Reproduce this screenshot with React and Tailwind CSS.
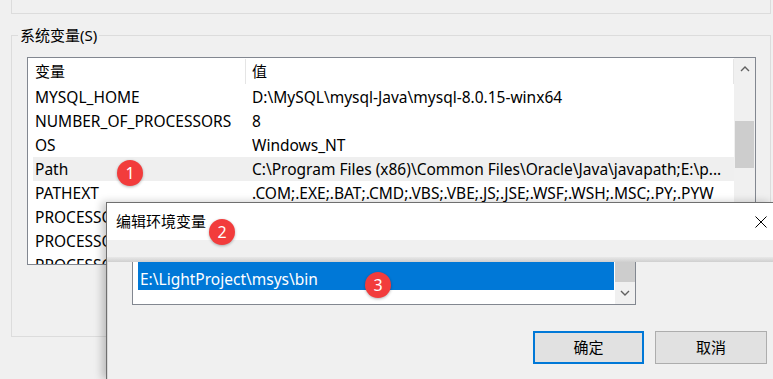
export default function App() {
  const rows = [
    ["MYSQL_HOME", "D:\\MySQL\\mysql-Java\\mysql-8.0.15-winx64"],
    ["NUMBER_OF_PROCESSORS", "8"],
    ["OS", "Windows_NT"],
    ["Path", "C:\\Program Files (x86)\\Common Files\\Oracle\\Java\\javapath;E:\\p..."],
    ["PATHEXT", ".COM;.EXE;.BAT;.CMD;.VBS;.VBE;.JS;.JSE;.WSF;.WSH;.MSC;.PY;.PYW"],
    ["PROCESSOR_ARCHITECTURE", "AMD64"],
    ["PROCESSOR_IDENTIFIER", "Intel64 Family 6"],
    ["PROCESSOR_LEVEL", "6"],
  ];
  const Badge = ({ n, cls }) => (
    <div
      className={`absolute ${cls} w-[26px] h-[26px] rounded-full bg-[#f23c3c] text-white text-[16px] leading-none flex items-center justify-center shadow-[0_1px_3px_rgba(0,0,0,0.3)] font-['Noto_Sans',sans-serif]`}
    >
      {n}
    </div>
  );
  return (
    <div className="relative w-[773px] h-[379px] overflow-hidden bg-[#f0f0f0] text-[15.5px] text-black font-['Noto_Sans','Noto_Sans_CJK_SC',sans-serif]">
      {/* upper group box remnant */}
      <div className="ml-[11px] mr-[2px] h-[14px] border-x border-b border-[#dcdcdc]" />
      {/* system variables group */}
      <div className="ml-[11px] mr-[2px] mt-[21px] h-[302px] border border-[#dcdcdc]">
        <div className="-mt-[10px] ml-[6px] w-fit bg-[#f0f0f0] px-[2px] leading-[18px] text-[15px]">系统变量(S)</div>
        <div className="ml-[15px] mt-[13px] w-[729px] h-[208px] border border-[#828790] bg-white flex overflow-hidden">
          <div className="flex-1 pl-[5px] overflow-hidden">
            <div className="h-[27px] flex items-center text-[15px]">
              <div className="w-[212px] pl-[2px]">变量</div>
              <div className="w-px h-[25px] bg-[#e5e5e5]" />
              <div className="flex-1 pl-[6px]">值</div>
              <div className="w-px h-[25px] bg-[#e5e5e5]" />
            </div>
            {rows.map(([k, v], i) => (
              <div
                key={k}
                className={`h-[24px] pt-px flex items-center whitespace-nowrap ${i === 3 ? "bg-[#efefef]" : ""}`}
              >
                <div className="w-[219px] pl-[2px] overflow-hidden">{k}</div>
                <div className="flex-1 overflow-hidden">{v}</div>
              </div>
            ))}
          </div>
          <div className="w-[21px] bg-[#f0f0f0] flex flex-col">
            <div className="h-[21px] flex items-center justify-center">
              <svg width="10" height="6" viewBox="0 0 10 6">
                <polyline points="1,5 5,1 9,5" fill="none" stroke="#606060" strokeWidth="1.4" />
              </svg>
            </div>
            <div className="mt-[42px] h-[47px] mx-px bg-[#cdcdcd]" />
          </div>
        </div>
      </div>

      {/* dialog */}
      <div className="absolute left-[106px] top-[202px] right-0 bottom-0 border-l border-t border-[#6f6f6f] bg-[#f0f0f0] shadow-[-4px_0_8px_rgba(0,0,0,0.22)] flex flex-col">
        <div className="h-[37px] bg-white flex items-center justify-between pl-[9px] pr-[6px]">
          <span className="leading-none text-[15px]">编辑环境变量</span>
          <svg width="12" height="12" viewBox="0 0 12 12">
            <path d="M0.5 0.5 L11.5 11.5 M11.5 0.5 L0.5 11.5" stroke="#000" strokeWidth="1" />
          </svg>
        </div>
        <div className="h-[17px] bg-[#f0f0f0]" />
        <div className="h-[5px] bg-gradient-to-b from-[#e8e8e8] to-[#cfcfcf]" />
        <div className="flex-1 flex flex-col border-l border-[#d8d8d8]">
          <div className="ml-[24px] w-[504px] h-[43px] border-x border-b border-[#828790] bg-white flex">
            <div className="flex-1 pl-[5px] pr-px">
              <div className="h-[28px] bg-[#0078d7] text-white overflow-hidden">
                <div className="mt-[5px] pl-[2px] leading-[24px]">E:\LightProject\msys\bin</div>
              </div>
            </div>
            <div className="w-[20px] bg-[#f0f0f0] flex flex-col">
              <div className="h-[20px] bg-[#cdcdcd]" />
              <div className="flex-1 flex items-center justify-center">
                <svg width="10" height="6" viewBox="0 0 10 6">
                  <polyline points="1,1 5,5 9,1" fill="none" stroke="#606060" strokeWidth="1.4" />
                </svg>
              </div>
            </div>
          </div>
          <div className="mt-[26px] flex justify-end gap-[11px] pr-[6px] text-[15px]">
            <button className="w-[111px] h-[33px] border-2 border-[#0078d7] bg-[#e1e1e1] flex items-center justify-center">确定</button>
            <button className="w-[112px] h-[33px] border border-[#adadad] bg-[#e1e1e1] flex items-center justify-center">取消</button>
          </div>
        </div>
      </div>

      <Badge n="1" cls="left-[117px] top-[160px]" />
      <Badge n="2" cls="left-[209px] top-[219px]" />
      <Badge n="3" cls="left-[365px] top-[272px]" />
    </div>
  );
}
